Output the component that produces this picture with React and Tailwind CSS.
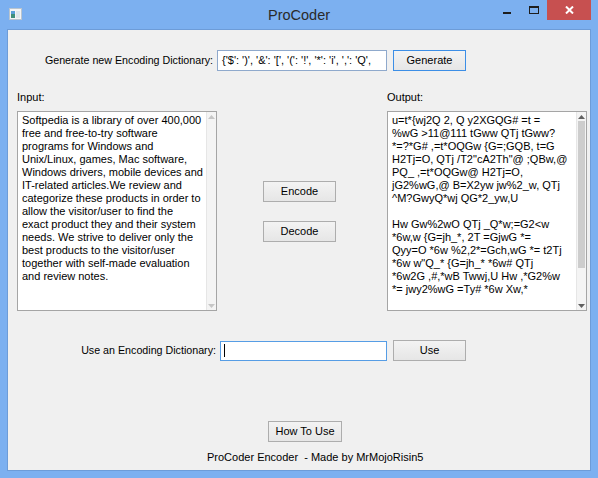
import React from "react";

const FONT = { fontFamily: '"Liberation Sans", Arial, sans-serif' };

const inputLines = [
  "Softpedia is a library of over 400,000",
  "free and free-to-try software",
  "programs for Windows and",
  "Unix/Linux, games, Mac software,",
  "Windows drivers, mobile devices and",
  "IT-related articles.We review and",
  "categorize these products in order to",
  "allow the visitor/user to find the",
  "exact product they and their system",
  "needs. We strive to deliver only the",
  "best products to the visitor/user",
  "together with self-made evaluation",
  "and review notes.",
];

const outputLines = [
  "u=t*{wj2Q 2, Q y2XGQG# =t =",
  "%wG >11@111 tGww QTj tGww?",
  "*=?*G# ,=t*OQGw {G=;GQB, t=G",
  'H2Tj=O, QTj /T2"cA2Th"@ ;QBw,@',
  "PQ_ ,=t*OQGw@ H2Tj=O,",
  "jG2%wG,@ B=X2yw jw%2_w, QTj",
  "^M?GwyQ*wj QG*2_yw,U",
  " ",
  "Hw Gw%2wO QTj _Q*w;=G2<w",
  "*6w,w {G=jh_*, 2T =GjwG *=",
  "Qyy=O *6w %2,2*=Gch,wG *= t2Tj",
  '*6w w"Q_* {G=jh_* *6w# QTj',
  "*6w2G ,#,*wB Twwj,U Hw ,*G2%w",
  "*= jwy2%wG =Ty# *6w Xw,*",
];

function Btn({ children, className = "" }) {
  return (
    <div
      className={
        "flex items-center justify-center h-[21px] border bg-gradient-to-b from-[#f3f3f3] to-[#e6e6e6] text-[11px] text-black " +
        className
      }
    >
      {children}
    </div>
  );
}

function Arrow({ up, color }) {
  return (
    <svg width="7" height="4" viewBox="0 0 7 4">
      {up ? (
        <polygon points="0,4 7,4 3.5,0" fill={color} />
      ) : (
        <polygon points="0,0 7,0 3.5,4" fill={color} />
      )}
    </svg>
  );
}

function TextBox({ lines, active }) {
  return (
    <div className="flex w-[200px] h-[200px] border border-[#a5a5a5] bg-white">
      <div className="flex-1 pl-[4px] pt-[2px] overflow-hidden">
        {lines.map((l, i) => (
          <div key={i} className="whitespace-pre text-[11px] leading-[13px] text-black">
            {l}
          </div>
        ))}
      </div>
      <div className="w-[10px] flex flex-col items-center bg-[#f4f4f4] border-l border-[#e6e6e6]">
        <div className="h-[8px] flex items-center justify-center pt-[2px]">
          <Arrow up color={active ? "#606060" : "#c6c6c6"} />
        </div>
        <div className="flex-1 w-full px-[1px] pt-[1px]">
          {active && <div className="w-full h-[147px] bg-[#cdcdcd]" />}
        </div>
        <div className="h-[8px] flex items-center justify-center">
          <Arrow color={active ? "#606060" : "#c6c6c6"} />
        </div>
      </div>
    </div>
  );
}

export default function App() {
  return (
    <div
      className="w-[598px] h-[478px] bg-[#7cb0f0] flex flex-col overflow-hidden"
      style={FONT}
    >
      {/* Title bar */}
      <div className="h-[29px] grid grid-cols-[1fr_auto_1fr]">
        <div className="pl-[9px] pt-[8px]">
          <svg width="13" height="12" viewBox="0 0 13 12">
            <rect x="0.5" y="0.5" width="12" height="11" fill="#f4f4f4" stroke="#b9c4cf" />
            <rect x="2" y="3" width="4" height="7" fill="#3f8f7a" />
            <rect x="2" y="3" width="4" height="3" fill="#5aa0d8" />
            <rect x="7" y="3" width="4" height="7" fill="#dfe6ea" />
          </svg>
        </div>
        <div className="pt-[6px] text-[14.5px] leading-[18px] text-[#2a2a2a]">ProCoder</div>
        <div className="flex items-start justify-end pr-[7px]">
          <div className="mt-[12px] w-[8px] h-[2px] bg-[#1e1e1e]" />
          <div className="ml-[18px] mt-[6px] w-[10px] h-[8px] border border-[#1e1e1e] border-t-2" />
          <div className="ml-[8px] w-[44px] h-[20px] bg-[#c75050] flex items-center justify-center">
            <svg width="9" height="8" viewBox="0 0 9 8">
              <path d="M1 0.5 L8 7.5 M8 0.5 L1 7.5" stroke="white" strokeWidth="2" />
            </svg>
          </div>
        </div>
      </div>

      {/* Client area */}
      <div className="flex-1 mx-[7px] mb-[7px] border border-[#6d9cd8] bg-[#f0f0f0] flex flex-col text-[11px] text-black">
        {/* Row 1 */}
        <div className="mt-[20px] h-[21px] flex items-center">
          <div className="w-[205px] text-right leading-[13px] text-[10.7px]">Generate new Encoding Dictionary:</div>
          <div className="ml-[4px] w-[170px] h-[21px] border border-[#8fa9cc] bg-white flex items-center pl-[4px] overflow-hidden">
            <span className="whitespace-pre leading-[13px]">{"{'$': ')', '&': '[', '(': '!', '*': 'i', ',': 'Q',"}</span>
          </div>
          <Btn className="ml-[6px] w-[73px] border-[#3c8ee6]">Generate</Btn>
        </div>

        {/* Labels */}
        <div className="mt-[19px] h-[14px] flex leading-[14px]">
          <div className="w-[379px] pl-[9px]">Input:</div>
          <div>Output:</div>
        </div>

        {/* Text areas */}
        <div className="mt-[7px] flex pl-[9px]">
          <TextBox lines={inputLines} />
          <div className="w-[170px] flex flex-col pl-[46px] pt-[70px]">
            <Btn className="w-[73px] border-[#adadad]">Encode</Btn>
            <Btn className="mt-[19px] w-[73px] border-[#adadad]">Decode</Btn>
          </div>
          <TextBox lines={outputLines} active />
        </div>

        {/* Row 3 */}
        <div className="mt-[29px] h-[21px] flex items-center">
          <div className="w-[208px] text-right leading-[13px] text-[10.7px]">Use an Encoding Dictionary:</div>
          <div className="ml-[4px] w-[167px] h-[20px] border border-[#569de5] bg-white flex items-center pl-[3px]">
            <div className="w-px h-[13px] bg-black" />
          </div>
          <Btn className="ml-[6px] w-[73px] border-[#adadad]">Use</Btn>
        </div>

        {/* How to use */}
        <div className="mt-[60px] flex">
          <Btn className="ml-[260px] w-[74px] border-[#adadad]">How To Use</Btn>
        </div>
        <div className="mt-[9px] pl-[199px] leading-[13px] whitespace-pre">
          ProCoder Encoder  - Made by MrMojoRisin5
        </div>
      </div>
    </div>
  );
}
